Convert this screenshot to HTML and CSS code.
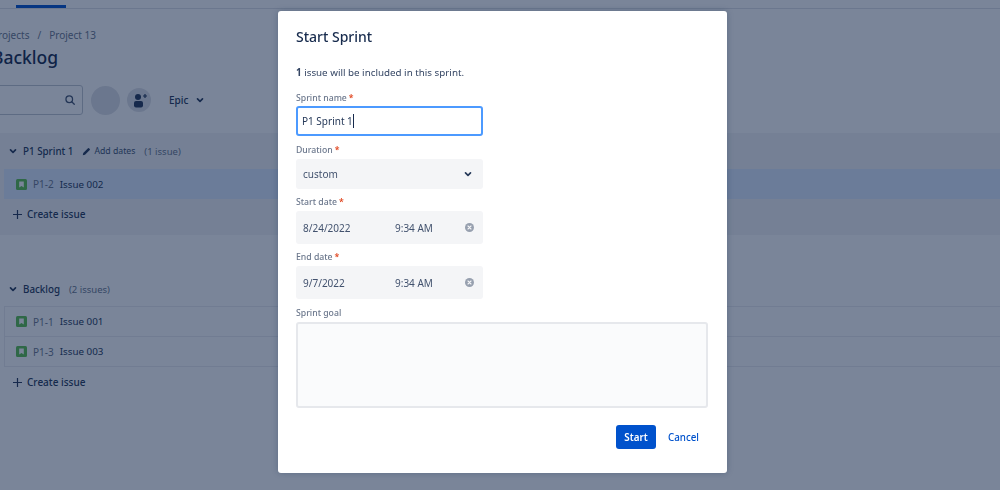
FILE: index.html
```html
<!DOCTYPE html>
<html lang="en">
<head>
<meta charset="utf-8">
<title>Start Sprint</title>
<link rel="stylesheet" href="styles.css">
</head>
<body>
<div class="page">
  <header class="topnav"><span class="topnav-tab"></span></header>
  <main class="board">
    <nav class="crumbs"><span>Projects</span><span class="crumb-sep">/</span><span>Project 13</span></nav>
    <h1 class="board-title">Backlog</h1>
    <div class="filters">
      <div class="search">
        <svg class="search-icon" viewBox="0 0 16 16" width="12" height="12"><circle cx="7" cy="7" r="4.400" fill="none" stroke="#42526e" stroke-width="1.700"/><path d="M10.300 10.300l3.400 3.400" stroke="#42526e" stroke-width="1.700" stroke-linecap="round"/></svg>
      </div>
      <span class="avatar"></span>
      <span class="add-user">
        <svg viewBox="0 0 24 24" width="24" height="24"><circle cx="11" cy="9" r="3" fill="#253858"/><rect x="7" y="13" width="9" height="6.500" rx="2" fill="#253858"/><path d="M18 6v4M16 8h4" stroke="#253858" stroke-width="1.200"/></svg>
      </span>
      <span class="epic">Epic
        <svg viewBox="0 0 12 12" width="10" height="10"><path d="M3 4.700l3 3 3-3" fill="none" stroke="#253858" stroke-width="2" stroke-linecap="round" stroke-linejoin="round"/></svg>
      </span>
    </div>
  </main>
  <section class="sprint">
    <div class="section-head">
      <svg class="chev" viewBox="0 0 12 12" width="10" height="10"><path d="M3 4.700l3 3 3-3" fill="none" stroke="#253858" stroke-width="2" stroke-linecap="round" stroke-linejoin="round"/></svg>
      <strong class="section-name">P1 Sprint 1</strong>
      <span class="add-dates">
        <svg viewBox="0 0 12 12" width="9" height="9"><path d="M1 11l.7-3L8 1.700a1 1 0 0 1 1.400 0l.9.9a1 1 0 0 1 0 1.400L4 10.300z" fill="#253858"/></svg>
        Add dates</span>
      <span class="count">(1 issue)</span>
    </div>
    <div class="issue issue-selected">
      <svg class="story" viewBox="0 0 11 11" width="11" height="11"><rect width="11" height="11" rx="1.500" fill="#5cbf4c"/><path d="M3.200 2.500h4.600v6l-2.300-1.500-2.300 1.500z" fill="#fff"/></svg>
      <span class="issue-key">P1-2</span><span class="issue-name">Issue 002</span>
    </div>
    <div class="create">
      <svg class="plus" viewBox="0 0 9 9" width="9" height="9"><path d="M4.500 0v9M0 4.500h9" stroke="#253858" stroke-width="1.200"/></svg>Create issue</div>
  </section>
  <section class="backlog">
    <div class="section-head section-head-tight">
      <svg class="chev" viewBox="0 0 12 12" width="10" height="10"><path d="M3 4.700l3 3 3-3" fill="none" stroke="#253858" stroke-width="2" stroke-linecap="round" stroke-linejoin="round"/></svg>
      <strong class="section-name">Backlog</strong>
      <span class="count">(2 issues)</span>
    </div>
    <div class="issue-list">
      <div class="issue issue-ruled">
        <svg class="story" viewBox="0 0 11 11" width="11" height="11"><rect width="11" height="11" rx="1.500" fill="#5cbf4c"/><path d="M3.200 2.500h4.600v6l-2.300-1.500-2.300 1.500z" fill="#fff"/></svg>
        <span class="issue-key">P1-1</span><span class="issue-name">Issue 001</span>
      </div>
      <div class="issue issue-last">
        <svg class="story" viewBox="0 0 11 11" width="11" height="11"><rect width="11" height="11" rx="1.500" fill="#5cbf4c"/><path d="M3.200 2.500h4.600v6l-2.300-1.500-2.300 1.500z" fill="#fff"/></svg>
        <span class="issue-key">P1-3</span><span class="issue-name">Issue 003</span>
      </div>
    </div>
    <div class="create">
      <svg class="plus" viewBox="0 0 9 9" width="9" height="9"><path d="M4.500 0v9M0 4.500h9" stroke="#253858" stroke-width="1.200"/></svg>Create issue</div>
  </section>
</div>

<div class="overlay">
  <div class="modal">
    <h2 class="modal-title">Start Sprint</h2>
    <p class="modal-note"><b>1</b> issue will be included in this sprint.</p>

    <div class="label label-first">Sprint name<span class="req">*</span></div>
    <div class="name-input">P1 Sprint 1<span class="caret"></span></div>

    <div class="label">Duration<span class="req">*</span></div>
    <div class="select">custom
      <svg viewBox="0 0 12 12" width="10" height="10"><path d="M3 4.700l3 3 3-3" fill="none" stroke="#253858" stroke-width="2" stroke-linecap="round" stroke-linejoin="round"/></svg>
    </div>

    <div class="label label-tight">Start date<span class="req">*</span></div>
    <div class="datetime">
      <span class="date">8/24/2022</span><span class="time">9:34 AM</span>
      <svg class="clear" viewBox="0 0 12 12" width="9" height="9"><circle cx="6" cy="6" r="6" fill="#97a0af"/><path d="M4 4l4 4M8 4l-4 4" stroke="#f4f5f7" stroke-width="1.500" stroke-linecap="round"/></svg>
    </div>

    <div class="label label-tight">End date<span class="req">*</span></div>
    <div class="datetime">
      <span class="date">9/7/2022</span><span class="time">9:34 AM</span>
      <svg class="clear" viewBox="0 0 12 12" width="9" height="9"><circle cx="6" cy="6" r="6" fill="#97a0af"/><path d="M4 4l4 4M8 4l-4 4" stroke="#f4f5f7" stroke-width="1.500" stroke-linecap="round"/></svg>
    </div>

    <div class="label">Sprint goal</div>
    <div class="goal"></div>

    <div class="actions">
      <span class="btn-start">Start</span>
      <span class="btn-cancel">Cancel</span>
    </div>
  </div>
</div>
</body>
</html>
```
FILE: styles.css
```css
* { box-sizing: border-box; }
html, body { margin: 0; height: 100%; overflow: hidden; }
body {
  font-family: "Noto Sans", "Open Sans", sans-serif;
  font-size: 10px;
  color: #172b4d;
  background: #fff;
}

.topnav {
  height: 9px;
  border-bottom: 1px solid #dfe1e6;
  padding: 5px 0 0 16px;
}
.topnav-tab {
  display: block;
  width: 50px;
  height: 3px;
  background: #0052cc;
}

.board { margin-left: -5px; }
.crumbs {
  display: flex;
  gap: 8px;
  margin-top: 19px;
  margin-left: -3px;
  height: 14px;
  color: #6b778c;
  font-size: 10px;
  line-height: 14px;
}
.board-title {
  margin: 2px 0 0 -3px;
  font-size: 17.500px;
  line-height: 26px;
  font-weight: 500;
}
.filters {
  display: flex;
  align-items: center;
  margin-top: 15px;
  height: 30px;
}
.search {
  width: 88px;
  height: 30px;
  border: 1px solid #c1c7d0;
  border-radius: 3px;
  display: flex;
  align-items: center;
  justify-content: flex-end;
  padding-right: 6px;
}
.avatar {
  width: 29px;
  height: 29px;
  border-radius: 50%;
  background: #dfe1e6;
  margin-left: 8px;
}
.add-user {
  width: 24px;
  height: 24px;
  border-radius: 50%;
  background: #dfe1e6;
  margin-left: 7px;
  display: flex;
}
.epic {
  display: flex;
  align-items: center;
  gap: 7px;
  margin-left: 18px;
  font-size: 10px;
  font-weight: 500;
  color: #253858;
}

.sprint {
  margin-top: 18px;
  height: 102px;
  background: #f4f5f7;
  padding-left: 4px;
}
.section-head {
  height: 36px;
  display: flex;
  align-items: center;
  padding-left: 4px;
}
.section-head-tight { height: 34px; }
.chev { margin-right: 5px; }
.section-name { font-size: 9.800px; font-weight: 500; color: #253858; }
.add-dates {
  display: flex;
  align-items: center;
  gap: 3px;
  margin-left: 9px;
  font-size: 8.700px;
  color: #42526e;
}
.count { margin-left: 9px; font-size: 9.500px; color: #6b778c; }

.issue {
  height: 30px;
  display: flex;
  align-items: center;
  padding-left: 12px;
  background: #fff;
}
.issue-selected { background: #deebff; }
.issue-ruled { border-bottom: 1px solid #ebecf0; }
.issue-last { height: 29px; }
.story { margin-right: 6px; }
.issue-key { color: #6b778c; margin-right: 6px; }
.issue-name { color: #253858; font-size: 9.800px; }

.create {
  height: 30px;
  display: flex;
  align-items: center;
  padding-left: 9px;
  color: #253858;
  font-weight: 500;
}
.plus { margin-right: 5px; }

.backlog {
  margin-top: 37px;
  padding-left: 4px;
}
.issue-list { border: 1px solid #ebecf0; border-right: 0; }
.issue-list .issue { padding-left: 11px; }

.overlay {
  position: fixed;
  inset: 0;
  background: rgba(9, 30, 66, .54);
  padding-top: 11px;
  padding-left: 278px;
}
.modal {
  width: 449px;
  height: 462px;
  background: #fff;
  border-radius: 3px;
  padding: 16px 18px 0;
  box-shadow: 0 0 6px rgba(9, 30, 66, .25);
}
.modal-title {
  margin: 0;
  font-size: 14px;
  line-height: 20px;
  font-weight: 500;
  color: #172b4d;
}
.modal-note {
  margin: 19px 0 0;
  font-size: 9.800px;
  line-height: 14px;
  color: #344563;
}
.label {
  font-size: 8.700px;
  line-height: 12px;
  font-weight: 500;
  color: #6b778c;
  margin-top: 8px;
  margin-bottom: 3px;
}
.label-first { margin-top: 12px; margin-bottom: 2px; }
.label-tight { margin-top: 7px; }
.req { color: #de350b; margin-left: 2px; }
.name-input {
  width: 187px;
  height: 30px;
  border: 2px solid #4c9aff;
  border-radius: 3px;
  display: flex;
  align-items: center;
  padding-left: 4px;
  font-size: 10px;
  color: #253858;
}
.caret { width: 1px; height: 14px; background: #172b4d; }
.select, .datetime {
  width: 187px;
  background: #f4f5f7;
  border-radius: 3px;
  display: flex;
  align-items: center;
  padding-left: 7px;
  font-size: 10px;
  color: #42526e;
}
.select { height: 30px; justify-content: space-between; padding-right: 10px; }
.datetime { height: 33px; }
.date { width: 92px; }
.time { width: 70px; }
.goal {
  width: 412px;
  height: 86px;
  background: #fafbfc;
  border: 2px solid #e6e8ec;
  border-radius: 3px;
}
.actions {
  display: flex;
  align-items: center;
  justify-content: flex-end;
  margin-top: 17px;
  padding-right: 10px;
  gap: 12px;
}
.btn-start {
  width: 40px;
  height: 24px;
  background: #0052cc;
  color: #fff;
  border-radius: 3px;
  font-size: 9.800px;
  font-weight: 600;
  display: flex;
  align-items: center;
  justify-content: center;
}
.btn-cancel { color: #0052cc; font-size: 9.800px; font-weight: 500; }
```
